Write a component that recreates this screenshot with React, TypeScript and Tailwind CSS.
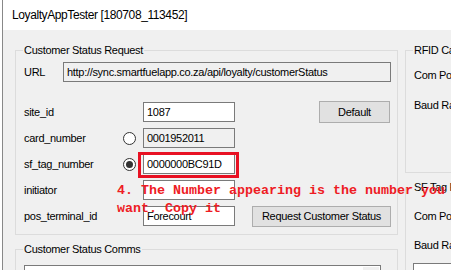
import React from 'react';

const TextBox = ({ value, readOnly, className = '' }: { value: string; readOnly?: boolean; className?: string }) => (
  <div
    className={`h-[20px] border border-[#7a7a7a] flex items-center px-[3px] whitespace-nowrap overflow-hidden ${readOnly ? 'bg-[#f0f0f0]' : 'bg-white'} ${className}`}
  >
    {value}
  </div>
);

const Radio = ({ checked }: { checked?: boolean }) => (
  <div className="w-[13px] h-[13px] rounded-full border border-[#333] bg-white flex items-center justify-center">
    {checked && <div className="w-[7px] h-[7px] rounded-full bg-[#333]" />}
  </div>
);

const Button = ({ label, className = '' }: { label: string; className?: string }) => (
  <div className={`border border-[#adadad] bg-[#e1e1e1] flex items-center justify-center ${className}`}>{label}</div>
);

const FormRow = ({ label, value, radio, checked, readOnly, children }: {
  label: string;
  value: string;
  radio?: boolean;
  checked?: boolean;
  readOnly?: boolean;
  children?: React.ReactNode;
}) => (
  <div className="mt-[6px] h-[20px] flex items-center">
    <span className="w-[99px]">{label}</span>
    <div className="w-[13px]">{radio && <Radio checked={checked} />}</div>
    <TextBox value={value} readOnly={readOnly} className="ml-[7px] w-[92px]" />
    {children}
  </div>
);

export default function App() {
  return (
    <div className="relative w-[451px] h-[270px] overflow-hidden bg-white pl-[2px] font-['Liberation_Sans',Arial,sans-serif] text-[11px] tracking-[-0.3px] text-black">
      <div className="h-full border-l border-[#888] flex flex-col">
        {/* Title bar */}
        <div className="h-[30px] shrink-0 bg-white flex items-center pl-[9px] text-[12px] tracking-[-0.4px]">
          LoyaltyAppTester [180708_113452]
        </div>

        {/* Body */}
        <div className="flex-1 min-h-0 bg-[#f0f0f0] pl-[12px] pt-[14px] flex gap-[7px]">
          {/* Left column */}
          <div className="w-[383px] shrink-0 flex flex-col">
            <fieldset className="shrink-0 border border-[#dcdcdc] pl-[8px] pb-[8px]">
              <legend className="ml-[-1px] px-[1px] leading-[13px]">Customer Status Request</legend>
              <div className="mt-[5px] h-[20px] flex items-center">
                <span className="w-[39px]">URL</span>
                <TextBox value="http://sync.smartfuelapp.co.za/api/loyalty/customerStatus" readOnly className="w-[328px]" />
              </div>
              <div className="mt-[20px] h-[20px] flex items-center">
                <span className="w-[99px]">site_id</span>
                <div className="w-[13px]" />
                <TextBox value="1087" className="ml-[7px] w-[92px]" />
                <Button label="Default" className="ml-[84px] w-[71px] h-[22px] shrink-0" />
              </div>
              <FormRow label="card_number" value="0001952011" radio readOnly />
              <FormRow label="sf_tag_number" value="0000000BC91D" radio checked />
              <FormRow label="initiator" value="" />
              <FormRow label="pos_terminal_id" value="Forecourt">
                <Button label="Request Customer Status" className="ml-[17px] w-[139px] h-[21px] shrink-0" />
              </FormRow>
            </fieldset>

            <fieldset className="shrink-0 mt-[8px] border border-[#dcdcdc] pl-[8px] h-[60px]">
              <legend className="ml-[-1px] px-[1px] leading-[13px]">Customer Status Comms</legend>
              <div className="mt-[9px] w-[357px] h-[40px] bg-white border border-[#7a7a7a] flex justify-end pt-[1px] pr-[1px]">
                <div className="w-[16px] h-[10px] bg-[#f0f0f0]" />
              </div>
            </fieldset>
          </div>

          {/* Right column */}
          <div className="w-[90px] shrink-0 flex flex-col">
            <fieldset className="shrink-0 border border-[#dcdcdc] pl-[8px] h-[129px]">
              <legend className="ml-[-1px] px-[1px] leading-[13px] whitespace-nowrap">RFID Card Reader</legend>
              <div className="mt-[12px] leading-[13px] whitespace-nowrap">Com Port</div>
              <div className="mt-[17px] leading-[13px] whitespace-nowrap">Baud Rate</div>
            </fieldset>
            <fieldset className="shrink-0 mt-[8px] border border-[#dcdcdc] pl-[8px] h-[120px]">
              <legend className="ml-[-1px] px-[1px] leading-[13px] whitespace-nowrap">SF Tag Reader</legend>
              <div className="mt-[16px] leading-[13px] whitespace-nowrap">Com Port</div>
              <div className="mt-[16px] leading-[13px] whitespace-nowrap">Baud Rate</div>
              <div className="mt-[11px] ml-[-1px] h-[40px] bg-white border border-[#7a7a7a]" />
            </fieldset>
          </div>
        </div>
      </div>

      {/* Annotation overlay */}
      <div className="absolute left-[138px] top-[152px] w-[101px] h-[26px] border-[3px] border-[#e81123]" />
      <div className="absolute left-[117px] top-[182px] font-['Liberation_Mono',monospace] font-bold text-[13.33px] leading-[18px] tracking-normal text-[#ee1c24] whitespace-pre">
        {'4. The Number appearing is the number you\nwant. Copy it'}
      </div>
    </div>
  );
}
